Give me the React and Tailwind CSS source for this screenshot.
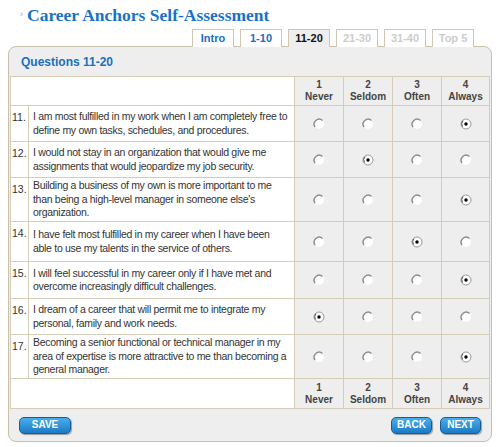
const questions = [
  { n: 11, lines: ["I am most fulfilled in my work when I am completely free to", "define my own tasks, schedules, and procedures."], v: 4, h: "h-[36px]" },
  { n: 12, lines: ["I would not stay in an organization that would give me", "assignments that would jeopardize my job security."], v: 2, h: "h-[36px]" },
  { n: 13, lines: ["Building a business of my own is more important to me", "than being a high-level manager in someone else's", "organization."], v: 4, h: "h-[44px]" },
  { n: 14, lines: ["I have felt most fulfilled in my career when I have been", "able to use my talents in the service of others."], v: 3, h: "h-[40px]" },
  { n: 15, lines: ["I will feel successful in my career only if I have met and", "overcome increasingly difficult challenges."], v: 4, h: "h-[37px]" },
  { n: 16, lines: ["I dream of a career that will permit me to integrate my", "personal, family and work needs."], v: 1, h: "h-[36px]" },
  { n: 17, lines: ["Becoming a senior functional or technical manager in my", "area of expertise is more attractive to me than becoming a", "general manager."], v: 4, h: "h-[44px]" },
];

const scale = [
  { n: 1, label: "Never" },
  { n: 2, label: "Seldom" },
  { n: 3, label: "Often" },
  { n: 4, label: "Always" },
];

const tabs = [
  { label: "Intro", state: "link" },
  { label: "1-10", state: "link" },
  { label: "11-20", state: "active" },
  { label: "21-30", state: "off" },
  { label: "31-40", state: "off" },
  { label: "Top 5", state: "off" },
];

function Radio({ checked }) {
  if (checked) {
    return (
      <svg width="12" height="12" viewBox="0 0 12 12" className="mx-auto block">
        <circle cx="6" cy="6" r="5" fill="#fff" stroke="#9a9a9a" strokeWidth="1" />
        <path d="M2.5 8.5 A5 5 0 0 1 3 2.6" stroke="#555" strokeWidth="1" fill="none" />
        <circle cx="6" cy="6" r="1.7" fill="#000" />
      </svg>
    );
  }
  return (
    <svg width="12" height="12" viewBox="0 0 12 12" className="mx-auto block">
      <circle cx="6" cy="6" r="5" fill="#fff" />
      <path d="M2 9 A5 5 0 0 1 9.5 2.5" stroke="#8a8a8a" strokeWidth="1.4" fill="none" />
    </svg>
  );
}

function ScaleHeader() {
  return scale.map((s) => (
    <td key={s.n} className="border border-[#d6cdb9] bg-[#eeeeee] text-center text-[10px] font-bold leading-[12px] tracking-normal text-[#444]">
      {s.n}
      <br />
      {s.label}
    </td>
  ));
}

function Button({ children, className }) {
  return (
    <button
      className={
        "h-[17px] rounded-[5px] border border-[#1a5a92] bg-gradient-to-b from-[#4aaeec] to-[#1a7ac6] text-[10px] font-bold leading-none text-white shadow-[1px_1px_1px_rgba(0,0,0,0.35)] " +
        className
      }
    >
      {children}
    </button>
  );
}

export default function App() {
  return (
    <div className="h-[447px] w-[500px] overflow-hidden bg-white font-['Liberation_Sans',Arial,sans-serif]">
      <div className="flex items-center pl-[20px] pt-[5px]">
        <span className="mr-[4px] text-[9px] text-[#999]">›</span>
        <h1 className="font-['Liberation_Serif','Times_New_Roman',serif] text-[17.5px] font-bold leading-[20px] text-[#1a72c4]">
          Career Anchors Self-Assessment
        </h1>
      </div>

      <div className="mt-[4px] flex justify-end gap-[6px] pr-[26px]">
        {tabs.map((t) => (
          <div
            key={t.label}
            className={
              "relative -mb-px flex h-[18px] w-[42px] items-center justify-center border border-b-0 border-[#cfc5b0] text-[11px] font-bold " +
              (t.state === "active"
                ? "z-10 bg-[#eeeeee] text-[#111]"
                : t.state === "link"
                ? "bg-white text-[#1a6fc0]"
                : "bg-white text-[#cccccc]")
            }
          >
            {t.label}
          </div>
        ))}
      </div>

      <div className="mx-[8px] overflow-hidden rounded-[8px] border border-[#c9bfaa] bg-[#eeeeee] px-px">
        <div className="flex h-[29px] items-center pl-[11px] text-[12px] font-bold text-[#1a6fc0]">
          Questions 11-20
        </div>
        <table className="w-full table-fixed border-collapse text-[10.5px] leading-[13.5px] tracking-[-0.3px] text-[#333]">
          <colgroup>
            <col className="w-[18px]" />
            <col />
            <col className="w-[49px]" />
            <col className="w-[49px]" />
            <col className="w-[49px]" />
            <col className="w-[48px]" />
          </colgroup>
          <tbody>
            <tr className="h-[29px]">
              <td colSpan={2} className="border border-[#d6cdb9] bg-white" />
              <ScaleHeader />
            </tr>
            {questions.map((q) => (
              <tr key={q.n} className={q.h}>
                <td className="border border-[#d6cdb9] bg-white pl-[1px] pt-[5px] align-top tracking-normal">
                  {q.n}.
                </td>
                <td className="whitespace-nowrap border border-[#d6cdb9] bg-white px-[4px] py-0 align-middle">
                  {q.lines.map((l, i) => (
                    <div key={i}>{l}</div>
                  ))}
                </td>
                {scale.map((s) => (
                  <td key={s.n} className="border border-[#d6cdb9] bg-[#eeeeee] align-middle">
                    <Radio checked={q.v === s.n} />
                  </td>
                ))}
              </tr>
            ))}
            <tr className="h-[30px]">
              <td colSpan={2} className="border border-[#d6cdb9] bg-white" />
              <ScaleHeader />
            </tr>
          </tbody>
        </table>
        <div className="flex h-[32px] items-center justify-between pl-[9px] pr-[9px]">
          <Button className="w-[52px]">SAVE</Button>
          <div className="flex gap-[8px]">
            <Button className="w-[41px]">BACK</Button>
            <Button className="w-[41px]">NEXT</Button>
          </div>
        </div>
      </div>
    </div>
  );
}
